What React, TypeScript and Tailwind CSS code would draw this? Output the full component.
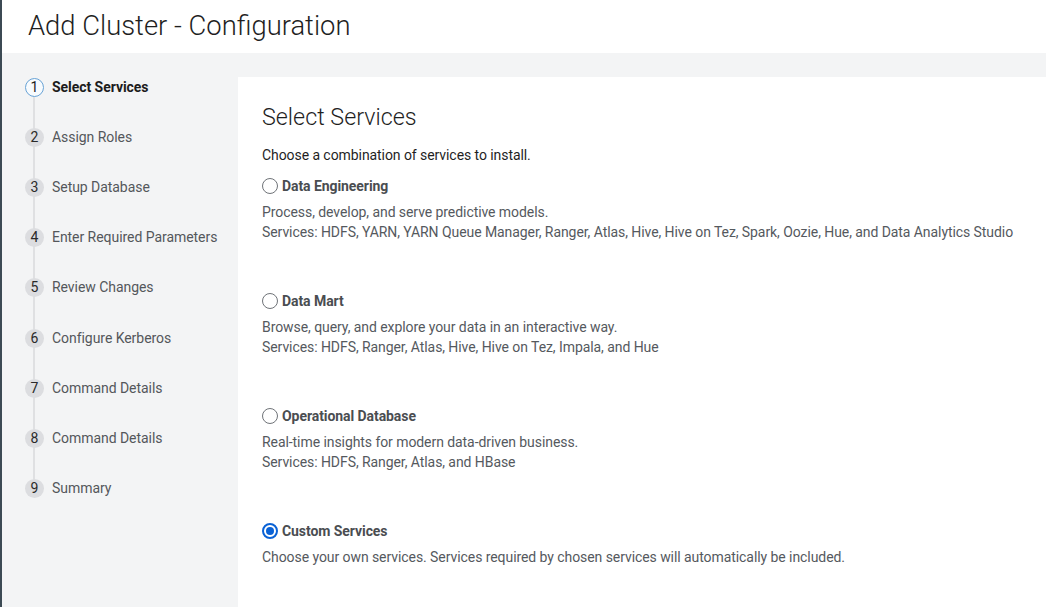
import React from 'react';

const steps = [
    'Select Services',
    'Assign Roles',
    'Setup Database',
    'Enter Required Parameters',
    'Review Changes',
    'Configure Kerberos',
    'Command Details',
    'Command Details',
    'Summary',
];

const options = [
    {
        title: 'Data Engineering',
        lines: [
            'Process, develop, and serve predictive models.',
            'Services: HDFS, YARN, YARN Queue Manager, Ranger, Atlas, Hive, Hive on Tez, Spark, Oozie, Hue, and Data Analytics Studio',
        ],
    },
    {
        title: 'Data Mart',
        lines: [
            'Browse, query, and explore your data in an interactive way.',
            'Services: HDFS, Ranger, Atlas, Hive, Hive on Tez, Impala, and Hue',
        ],
    },
    {
        title: 'Operational Database',
        lines: [
            'Real-time insights for modern data-driven business.',
            'Services: HDFS, Ranger, Atlas, and HBase',
        ],
    },
    {
        title: 'Custom Services',
        selected: true,
        lines: ['Choose your own services. Services required by chosen services will automatically be included.'],
    },
];

function Radio({ checked }: { checked?: boolean }) {
    if (checked) {
        return (
            <span className="w-[16px] h-[16px] rounded-full border-2 border-[#0a62d6] flex items-center justify-center bg-white">
                <span className="w-[8px] h-[8px] rounded-full bg-[#0a62d6]" />
            </span>
        );
    }
    return <span className="w-[16px] h-[16px] rounded-full border-[1.5px] border-[#6f7378] bg-white" />;
}

export default function App() {
    return (
        <div className="h-[607px] w-full flex flex-col border-l-2 border-[#3c4a54] font-['Roboto',sans-serif] overflow-hidden">
            <div className="h-[53px] bg-white flex items-center pl-[26px] shrink-0">
                <h1 className="text-[27.4px] font-light text-[#1f1f1f]">Add Cluster - Configuration</h1>
            </div>

            <div className="flex-1 flex bg-[#f3f4f5]">
                <aside className="w-[236px] shrink-0 pt-[9px]">
                    <div className="relative">
                        <div className="absolute left-[31px] top-[25px] h-[402px] w-[2px] bg-[#dfe0e2]" />
                        {steps.map((s, i) => (
                            <div key={i} className="relative h-[50.2px] flex items-center pl-[23px] gap-[8px] tracking-[-0.05px]">
                                {i === 0 ? (
                                    <span className="w-[19px] h-[19px] rounded-full border border-[#68a3d6] bg-[#f7fbfe] flex items-center justify-center text-[14px] text-[#1f1f1f]">
                                        1
                                    </span>
                                ) : (
                                    <span className="w-[19px] h-[19px] rounded-full bg-[#dcdde0] flex items-center justify-center text-[14px] text-[#2a2a2a]">
                                        {i + 1}
                                    </span>
                                )}
                                <span
                                    className={
                                        i === 0
                                            ? 'text-[14px] font-bold text-[#1c1c1c]'
                                            : 'text-[14px] text-[#54575b]'
                                    }
                                >
                                    {s}
                                </span>
                            </div>
                        ))}
                    </div>
                </aside>

                <main className="flex-1 mt-[24px] bg-white pl-[24px] pt-[26px] tracking-[-0.07px]">
                    <h2 className="text-[23.3px] leading-[28px] font-light text-[#1f1f1f] tracking-normal">Select Services</h2>
                    <p className="mt-[14px] text-[14px] leading-[20px] text-[#1f1f1f]">Choose a combination of services to install.</p>

                    <div className="mt-[11px] flex flex-col gap-[49px]">
                        {options.map((o, i) => (
                            <div key={i}>
                                <label className="flex items-center gap-[4px] h-[20px]">
                                    <Radio checked={o.selected} />
                                    <span className="text-[14px] font-bold text-[#4a4d51]">{o.title}</span>
                                </label>
                                <div className="mt-[6px] text-[14px] leading-[20px] text-[#55595e]">
                                    {o.lines.map((l, j) => (
                                        <p key={j}>{l}</p>
                                    ))}
                                </div>
                            </div>
                        ))}
                    </div>
                </main>
            </div>
        </div>
    );
}
